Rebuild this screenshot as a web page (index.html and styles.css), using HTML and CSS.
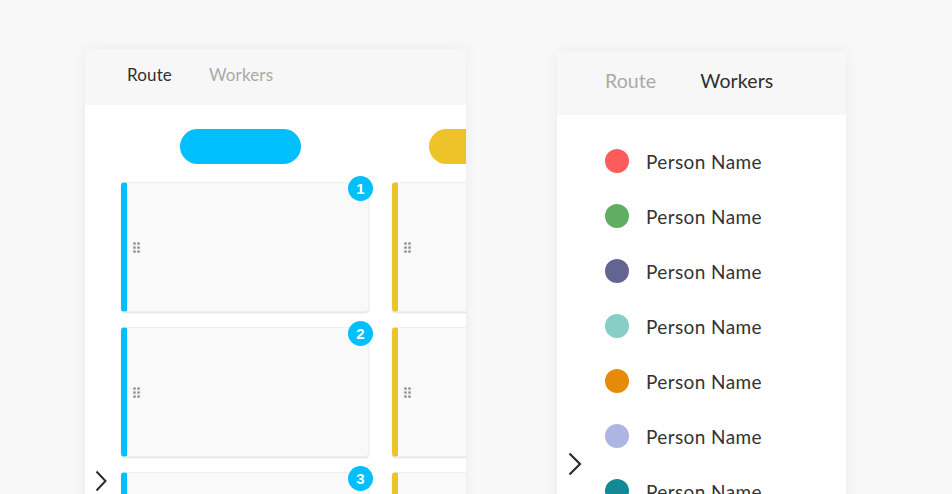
FILE: index.html
```html
<!DOCTYPE html>
<html>
<head>
<meta charset="utf-8">
<link rel="stylesheet" href="styles.css">
</head>
<body>
<div class="stage">
  <section class="panel panel-route">
    <header class="tabs tabs-sm">
      <span class="tab active">Route</span>
      <span class="tab">Workers</span>
    </header>
    <div class="route-body">
      <div class="column col-blue">
        <div class="pill"></div>
        <div class="card"><span class="handle"><i></i><i></i><i></i><i></i><i></i><i></i></span><span class="badge">1</span></div>
        <div class="card"><span class="handle"><i></i><i></i><i></i><i></i><i></i><i></i></span><span class="badge">2</span></div>
        <div class="card"><span class="handle"><i></i><i></i><i></i><i></i><i></i><i></i></span><span class="badge">3</span></div>
      </div>
      <div class="column col-yellow">
        <div class="pill"></div>
        <div class="card"><span class="handle"><i></i><i></i><i></i><i></i><i></i><i></i></span></div>
        <div class="card"><span class="handle"><i></i><i></i><i></i><i></i><i></i><i></i></span></div>
        <div class="card"><span class="handle"><i></i><i></i><i></i><i></i><i></i><i></i></span></div>
      </div>
    </div>
    <svg class="chevron chevron-left" viewBox="0 0 12 22" width="12" height="22"><path d="M1.5 1.5 L10.5 11 L1.5 20.5" fill="none" stroke="#2b2b2b" stroke-width="2"/></svg>
  </section>

  <section class="panel panel-workers">
    <header class="tabs tabs-lg">
      <span class="tab">Route</span>
      <span class="tab active">Workers</span>
    </header>
    <ul class="workers">
      <li><span class="dot" style="background:#fd5c5c"></span>Person Name</li>
      <li><span class="dot" style="background:#5fae62"></span>Person Name</li>
      <li><span class="dot" style="background:#646491"></span>Person Name</li>
      <li><span class="dot" style="background:#88cdc6"></span>Person Name</li>
      <li><span class="dot" style="background:#e68a07"></span>Person Name</li>
      <li><span class="dot" style="background:#adb5e2"></span>Person Name</li>
      <li><span class="dot" style="background:#128a96"></span>Person Name</li>
    </ul>
    <svg class="chevron chevron-right" viewBox="0 0 14 24" width="14" height="24"><path d="M1.5 1.5 L12 12 L1.5 22.5" fill="none" stroke="#2b2b2b" stroke-width="2.2"/></svg>
  </section>
</div>
</body>
</html>
```

FILE: styles.css
```css
html, body {
  margin: 0;
  padding: 0;
  height: 100%;
  overflow: hidden;
}
body {
  background: #f8f8f8;
  font-family: "Lato", "Noto Sans", sans-serif;
  color: #333;
}
.stage {
  display: flex;
  align-items: flex-start;
  gap: 91px;
  padding: 49px 0 0 85px;
}
.panel {
  position: relative;
  background: #fff;
  box-shadow: 0 0 14px rgba(0, 0, 0, 0.06);
  border-radius: 3px 3px 0 0;
}
.panel-route {
  width: 381px;
  height: 460px;
  overflow: hidden;
}
.panel-workers {
  width: 289px;
  height: 460px;
  margin-top: 2px;
}
.tabs {
  display: flex;
  align-items: center;
  background: #f7f7f7;
  box-sizing: border-box;
}
.tab {
  color: #a9a9a9;
}
.tab.active {
  color: #2f2f2f;
}
.tabs-sm {
  height: 56px;
  padding-left: 42px;
  gap: 37px;
  font-size: 17px;
  letter-spacing: 0.15px;
  padding-bottom: 6px;
}
.tabs-lg {
  height: 64px;
  padding-left: 48px;
  gap: 44px;
  font-size: 19.5px;
  letter-spacing: 0.1px;
  padding-bottom: 5px;
}

/* Route board */
.route-body {
  display: flex;
  gap: 23px;
  padding: 24px 0 0 36px;
}
.column {
  display: flex;
  flex-direction: column;
  gap: 15px;
  width: 248px;
  flex: none;
}
.pill {
  height: 35px;
  width: 121px;
  border-radius: 18px;
  margin-bottom: 3px;
}
.col-blue .pill { background: #00bfff; margin-left: 59px; }
.col-yellow .pill { background: #eec229; margin-left: 37px; }
.card {
  position: relative;
  height: 130px;
  box-sizing: border-box;
  background: #f9f9f9;
  border: 1px solid #eeeeee;
  border-left: 6px solid;
  border-radius: 4px;
  box-shadow: 0 1px 2px rgba(0, 0, 0, 0.13);
  display: flex;
  align-items: center;
  padding-left: 6px;
}
.col-blue .card { border-left-color: #00bfff; }
.col-yellow .card { border-left-color: #eec229; }
.handle {
  display: grid;
  grid-template-columns: 3px 3px;
  grid-auto-rows: 3px;
  gap: 1px;
}
.handle i {
  display: block;
  width: 3px;
  height: 3px;
  border-radius: 50%;
  background: #9e9e9e;
}
.badge {
  position: absolute;
  top: -7px;
  right: -5px;
  width: 25px;
  height: 25px;
  border-radius: 50%;
  background: #00bfff;
  color: #fff;
  font-family: "Liberation Sans", Arial, sans-serif;
  font-weight: bold;
  font-size: 15px;
  line-height: 25px;
  text-align: center;
}
.chevron {
  position: absolute;
}
.chevron-left {
  left: 10px;
  top: 421px;
}
.chevron-right {
  left: 11px;
  top: 401px;
}

/* Workers */
.workers {
  list-style: none;
  margin: 0;
  padding: 34px 0 0 48px;
  display: flex;
  flex-direction: column;
  gap: 31px;
}
.workers li {
  display: flex;
  align-items: center;
  gap: 17px;
  height: 24px;
  font-size: 19px;
  letter-spacing: 0.4px;
  color: #333;
}
.dot {
  width: 24px;
  height: 24px;
  border-radius: 50%;
  flex: none;
}
```
